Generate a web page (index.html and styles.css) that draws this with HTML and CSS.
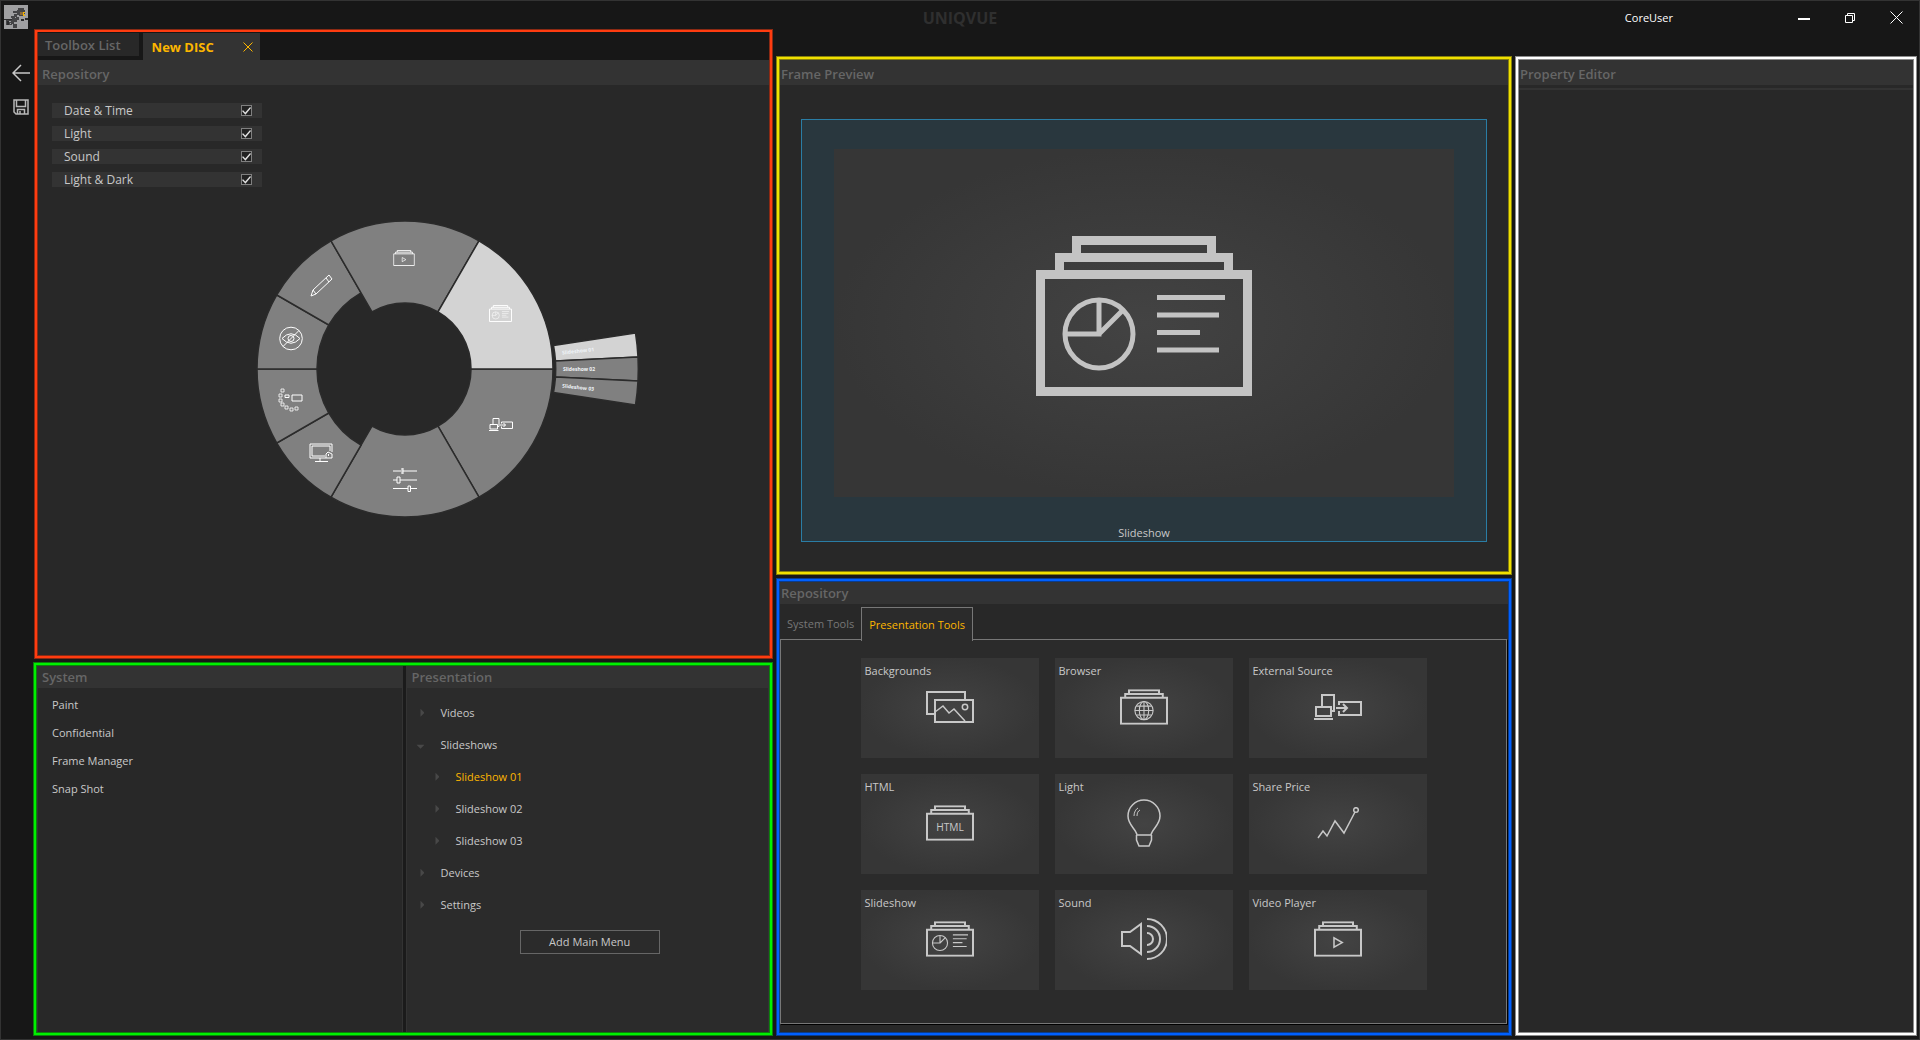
FILE: index.html
```html
<!DOCTYPE html>
<html lang="en">
<head>
<meta charset="utf-8">
<meta name="viewport" content="width=device-width, initial-scale=1">
<title>UNIQVUE</title>
<link rel="stylesheet" href="styles.css">
</head>
<body>
<svg class="defs" aria-hidden="true">
  <symbol id="stack" viewBox="0 0 216 160">
    <g fill="none" stroke="currentColor" stroke-width="9">
      <path d="M4.500 38.500H211.500V155.500H4.500Z"/>
      <path d="M23.500 38V21.500H192.500V38"/>
      <path d="M40.500 21V4.500H175.500V21"/>
    </g>
  </symbol>
  <symbol id="slides" viewBox="0 0 216 160">
    <use href="#stack" width="216" height="160"/>
    <g fill="none" stroke="currentColor" stroke-width="5">
      <circle cx="63" cy="98" r="34"/>
      <path d="M63 64V98H29M63 98L87 74"/>
      <path d="M121 61.500H189M121 79H183M121 96.500H164M121 114H183"/>
    </g>
  </symbol>
  <symbol id="video" viewBox="0 0 216 160">
    <use href="#stack" width="216" height="160"/>
    <path d="M90 75V117L127 96Z" fill="none" stroke="currentColor" stroke-width="7"/>
  </symbol>
  <symbol id="external" viewBox="0 0 48 26">
    <g fill="none" stroke="currentColor" stroke-width="2">
      <path d="M8 12V1H20V17H18M2 13H17V22H2ZM0 25H19"/>
      <path d="M25 11V8H47V21H25V17"/>
      <path d="M22 14H33M29 10L33 14L29 18"/>
    </g>
  </symbol>
</svg>

<header class="titlebar">
  <svg class="app-logo" viewBox="0 0 24 24" shape-rendering="crispEdges" aria-label="UNIQVUE">
    <path fill="#a0a0a2" d="M0 0h24v24H0z"/>
    <path fill="#454547" d="M14 3h6v2h1v4h-2v2h-4v-1h-2V8H9V6h4V5h1zM10 9h3v3h2v3h-2v2h-3v2h3v4H9v-4H8v1H2v-5h6v-2H7v-2h3z"/>
    <path fill="#2b2b2d" d="M0 14h8v1H0zM3 16h2v4H3zM17 14h3v2h-3zM21 13h3v2h-3z"/>
    <path fill="#a0a0a2" d="M5 16h2v1H5zM11 12h1v1h-1zM6 18h1v1H6z"/>
    <path fill="#8a6a3c" d="M16 7h3v3h-3z"/><path fill="#f5b400" d="M19 7h2v1h-1v2h1v1h-2z"/>
  </svg>
  <h1 class="app-title">UNIQVUE</h1>
  <div class="session">
    <span class="user">CoreUser</span>
    <div class="window-buttons">
      <button type="button" aria-label="Minimize"><svg width="12" height="14"><path d="M0 8H12" stroke="#fff" stroke-width="2"/></svg></button>
      <button type="button" aria-label="Restore"><svg width="12" height="12" fill="none" stroke="#fff"><path d="M1.500 3.500H8.500V10.500H1.500ZM3.500 3V1.500H10.500V8.500H9"/></svg></button>
      <button type="button" aria-label="Close"><svg width="13" height="13" stroke="#fff"><path d="M.5 .5L12.500 12.500M12.500 .5L.5 12.500"/></svg></button>
    </div>
  </div>
</header>

<div class="workspace">
  <nav class="rail" aria-label="File">
    <button type="button" aria-label="Back"><svg width="18" height="18" fill="none" stroke="#c8c8c8" stroke-width="1.500"><path d="M18 9H1M9 1L1 9L9 17"/></svg></button>
    <button type="button" aria-label="Save"><svg width="16" height="16" fill="none" stroke="#b8b8b8" stroke-width="1.500"><path d="M1 1H15V15H3L1 13ZM3.500 1V7.500H12.500V1M4.500 15V10.500H11.500V15M7 12V15"/></svg></button>
  </nav>

  <div class="column">
    <section class="panel panel-disc">
      <div class="doc-tabs" role="tablist">
        <button type="button" role="tab" class="doc-tab">Toolbox List</button>
        <button type="button" role="tab" class="doc-tab is-active" aria-selected="true">New DISC
          <svg width="10" height="10" stroke="#fdb600"><path d="M.5 .5L9.500 9.500M9.500 .5L.5 9.500"/></svg></button>
      </div>
      <h2 class="panel-head tall inset">Repository</h2>
      <div class="disc-body">
        <div class="options">
          <label class="option">Date &amp; Time<input type="checkbox" checked></label>
          <label class="option">Light<input type="checkbox" checked></label>
          <label class="option">Sound<input type="checkbox" checked></label>
          <label class="option">Light &amp; Dark<input type="checkbox" checked></label>
        </div>
        <svg class="disc" viewBox="-241 -150 480 300" role="img" aria-label="Disc menu">
          <g fill="#808080" stroke="#2b2b2b" stroke-width="1.500">
            <path d="M66 0A66 66 0 0 1 33 57.200L74 128.200A148 148 0 0 0 148 0Z"/>
            <path d="M33 57.200A66 66 0 0 1 -33 57.200L-74 128.200A148 148 0 0 0 74 128.200Z"/>
            <path d="M-44 76.200A88 88 0 0 1 -76.200 44L-128.200 74A148 148 0 0 0 -74 128.200Z"/>
            <path d="M-76.200 44A88 88 0 0 1 -88 0H-148A148 148 0 0 0 -128.200 74Z"/>
            <path d="M-88 0A88 88 0 0 1 -76.200 -44L-128.200 -74A148 148 0 0 0 -148 0Z"/>
            <path d="M-76.200 -44A88 88 0 0 1 -44 -76.200L-74 -128.200A148 148 0 0 0 -128.200 -74Z"/>
            <path d="M-33 -57.200A66 66 0 0 1 33 -57.200L74 -128.200A148 148 0 0 0 -74 -128.200Z"/>
            <path fill="#d3d3d3" d="M33 -57.200A66 66 0 0 1 66 0H148A148 148 0 0 0 74 -128.200Z"/>
            <path fill="#d3d3d3" d="M148.500 -23.500L230.500 -36A233 233 0 0 1 233 -12L150.500 -8A152 152 0 0 0 148.500 -23.500Z"/>
            <path d="M150.500 -8L233 -12A233 233 0 0 1 233 12L150.500 8A152 152 0 0 0 150.500 -8Z"/>
            <path d="M150.500 8L233 12A233 233 0 0 1 230.500 36L148.500 23.500A152 152 0 0 0 150.500 8Z"/>
          </g>
          <g class="disc-label">
            <text x="158" y="2" transform="rotate(-6)">Slideshow 01</text>
            <text x="158" y="2">Slideshow 02</text>
            <text x="158" y="2" transform="rotate(6)">Slideshow 03</text>
          </g>
          <g color="#fff" fill="none" stroke="#fff">
            <use href="#video" x="-12" y="-119" width="22" height="16" stroke="none"/>
            <use href="#slides" x="84" y="-64" width="23" height="17" stroke="none"/>
            <use href="#external" x="84" y="49" width="24" height="13" stroke="none"/>
            <path d="M-12 102H-4M-2 102H12M-3 99V105M-2 99V105M-12 111H-8M-5 111H12M-8 108H-5V114H-8ZM-12 119.500H3M6 119.500H12M3 117H5.500V122.500H3Z"/>
            <path d="M-79 89H-95V75H-73V83M-93 87V77H-75V82M-80 87H-93M-85 89V92M-90 92.500H-77M-79 89V85L-77 83L-73 85V89ZM-76.500 87V85"/>
            <path d="M-113 26H-103V32H-113ZM-120 26H-116V28.500H-120Z"/>
            <path d="M-124 20h3v3h-3zM-126 25h3v3h-3zM-126 30h3v3h-3zM-124 34h3v3h-3zM-120 37h3v3h-3zM-115 39h3v3h-3zM-110 38h3v3h-3z" stroke-width=".8"/>
            <circle cx="-114" cy="-30.500" r="11.300"/>
            <path d="M-123 -30.500Q-114 -40 -105 -30.500Q-114 -21 -123 -30.500ZM-122 -22.500L-106 -38.500"/>
            <circle cx="-114" cy="-30.500" r="3"/>
            <path d="M-94 -73L-92 -79L-76 -94L-73 -90L-89 -75ZM-92 -79L-89 -75M-79 -91L-76 -87"/>
          </g>
        </svg>
      </div>
    </section>

    <section class="panel panel-menus">
      <div class="subpanel system">
        <h2 class="panel-head inset">System</h2>
        <ul class="system-list">
          <li>Paint</li><li>Confidential</li><li>Frame Manager</li><li>Snap Shot</li>
        </ul>
      </div>
      <div class="subpanel presentation">
        <h2 class="panel-head inset">Presentation</h2>
        <ul class="tree">
          <li><span class="node">Videos</span></li>
          <li><span class="node open">Slideshows</span>
            <ul>
              <li><span class="node selected">Slideshow 01</span></li>
              <li><span class="node">Slideshow 02</span></li>
              <li><span class="node">Slideshow 03</span></li>
            </ul>
          </li>
          <li><span class="node">Devices</span></li>
          <li><span class="node">Settings</span></li>
        </ul>
        <button type="button" class="add-button">Add Main Menu</button>
      </div>
    </section>
  </div>

  <div class="column lowered">
    <section class="panel panel-preview">
      <h2 class="panel-head tall">Frame Preview</h2>
      <figure class="frame">
        <div class="frame-tile"><svg width="216" height="160" color="#c3c3c3"><use href="#slides" width="216" height="160"/></svg></div>
        <figcaption>Slideshow</figcaption>
      </figure>
    </section>

    <section class="panel panel-tools">
      <h2 class="panel-head">Repository</h2>
      <div class="tool-tabs" role="tablist">
        <button type="button" role="tab" class="tool-tab">System Tools</button>
        <button type="button" role="tab" class="tool-tab is-active" aria-selected="true">Presentation Tools</button>
      </div>
      <div class="tool-sheet">
        <div class="tools">
          <button type="button" class="tool"><span>Backgrounds</span>
            <svg width="48" height="32" fill="none" stroke="currentColor" stroke-width="2"><path d="M8 23H1V1H39V8M9 9H47V31H9Z"/><path d="M9 21L17 15L23 22L28 18L39 30" stroke-width="1.500"/><circle cx="39" cy="16" r="2.700" stroke-width="1.500"/></svg></button>
          <button type="button" class="tool"><span>Browser</span>
            <svg width="48" height="36" viewBox="0 0 216 160"><use href="#stack" width="216" height="160"/><g fill="none" stroke="currentColor" stroke-width="5"><circle cx="108" cy="96" r="41"/><ellipse cx="108" cy="96" rx="21" ry="41"/><path d="M108 55V137M67 96H149M73 76H143M73 116H143"/></g></svg></button>
          <button type="button" class="tool"><span>External Source</span>
            <svg width="48" height="26"><use href="#external" width="48" height="26"/></svg></button>
          <button type="button" class="tool"><span>HTML</span>
            <svg width="48" height="36" viewBox="0 0 216 160"><use href="#stack" width="216" height="160"/><text class="icon-text" x="108" y="114">HTML</text></svg></button>
          <button type="button" class="tool"><span>Light</span>
            <svg width="34" height="48" fill="none" stroke="currentColor" stroke-width="1.500"><path d="M10 36C9 30 1 26 1 17A16 16 0 0 1 33 17C33 26 25 30 24 36ZM9.500 36V41L12 47H22L24.500 41V36"/><path d="M7 17C7 13 9 10 11 9M10 17C10 14 11 12 13 11" stroke-width="1"/></svg></button>
          <button type="button" class="tool"><span>Share Price</span>
            <svg width="42" height="32" fill="none" stroke="currentColor" stroke-width="1.500"><path d="M1 31L6 24L10 29L18 14L27 26L38 5"/><circle cx="39" cy="3" r="2.300"/></svg></button>
          <button type="button" class="tool"><span>Slideshow</span>
            <svg width="48" height="36"><use href="#slides" width="48" height="36"/></svg></button>
          <button type="button" class="tool"><span>Sound</span>
            <svg width="46" height="42" fill="none" stroke="currentColor" stroke-width="2"><path d="M1 14H9L20 6V36L9 28H1Z"/><path d="M26 15A6 6 0 0 1 26 27M26 8A13 13 0 0 1 26 34M26 1A20 20 0 0 1 26 41"/></svg></button>
          <button type="button" class="tool"><span>Video Player</span>
            <svg width="48" height="36"><use href="#video" width="48" height="36"/></svg></button>
        </div>
      </div>
    </section>
  </div>

  <div class="column lowered">
    <section class="panel panel-props">
      <h2 class="panel-head tall">Property Editor</h2>
      <hr>
    </section>
  </div>
</div>
</body>
</html>
```

FILE: styles.css
```css
* { box-sizing: border-box; }

body {
  margin: 0;
  min-height: 100vh;
  display: flex;
  flex-direction: column;
  border: 1px solid #333;
  background: #171717;
  color: #c8c8c8;
  font: 11px/16px "Open Sans", "Noto Sans", sans-serif;
}

h1, h2, ul, figure { margin: 0; padding: 0; }
ul { list-style: none; }
button { margin: 0; padding: 0; border: 0; background: none; color: inherit; font: inherit; }
svg { display: block; }
.defs { display: none; }

/* Title bar */
.titlebar {
  height: 28px;
  display: grid;
  grid-template-columns: 1fr auto 1fr;
  align-items: center;
}
.app-logo { width: 24px; height: 24px; margin-left: 3px; align-self: end; }
.app-title { color: #2f2f2f; font-size: 16px; line-height: 20px; padding-top: 6px; }
.session { display: flex; justify-content: flex-end; align-items: center; gap: 125px; padding: 5px 16px 0 0; color: #fff; }
.window-buttons { display: flex; align-items: center; gap: 34px; }

/* Workspace */
.workspace {
  flex: 1;
  display: grid;
  grid-template-columns: 30px minmax(0, 739fr) minmax(0, 736fr) minmax(0, 402fr);
  gap: 3px;
  padding: 0 2px 3px 0;
}
.rail { display: flex; flex-direction: column; align-items: center; gap: 17px; padding: 35px 0 0 10px; }
.column { display: flex; flex-direction: column; gap: 3px; }
.lowered { padding-top: 27px; }

.panel {
  display: flex;
  flex-direction: column;
  margin: 1px;
  border: 2px solid var(--frame);
  box-shadow: 0 0 0 1px var(--edge), inset 0 0 0 1px var(--edge);
  background: #282828;
}
.panel-disc { --frame: #ff3c10; --edge: #8a2a14; flex: 630 1 0; padding: 0 1px; }
.panel-menus { --frame: #00f000; --edge: #0c800c; flex: 370 1 0; flex-direction: row; gap: 3px; padding: 1px; margin-left: 0; background: #1b1b1b; }
.panel-preview { --frame: #f0e000; --edge: #87800c; flex: 0 1 auto; padding: 1px 1px 30px; }
.panel-tools { --frame: #0060ff; --edge: #0c3c8a; flex: 1 1 auto; padding: 1px 1px 9px; }
.panel-props { --frame: #fff; --edge: #8c8c8c; flex: 1; padding: 1px; }

.panel-head {
  flex: none;
  height: 22px;
  padding: 0 1px;
  background: #333;
  color: #666;
  font-size: 13px;
  font-weight: 600;
  line-height: 22px;
}
.panel-head.tall { height: 25px; line-height: 28px; }
.panel-head.inset { padding-left: 4px; }

/* Disc designer */
.doc-tabs { display: flex; align-items: flex-start; gap: 4px; height: 28px; padding-top: 1px; background: #171717; }
.doc-tab { height: 23px; padding: 0 18px 0 7px; background: #282828; color: #666; font-size: 13px; font-weight: 600; line-height: 24px; }
.doc-tab.is-active { display: flex; align-items: center; gap: 29px; height: 27px; padding: 0 7px 0 9px; background: #333; color: #fdb600; font-weight: 700; }
.disc-body { flex: 1; display: flex; flex-direction: column; align-items: center; gap: 32px; padding: 18px 0 24px; }
.options { align-self: flex-start; width: 210px; margin-left: 14px; display: grid; gap: 8px; }
.option { display: flex; align-items: center; justify-content: space-between; height: 15px; padding: 0 10px 0 12px; background: #333; font-size: 12px; }
.option input { appearance: none; width: 11px; height: 11px; margin: 0; border: 1px solid #808080; background: #222; }
.option input:checked::before {
  content: "";
  display: block;
  height: 9px;
  background: #e0e0e0;
  clip-path: polygon(0 55%, 12% 47%, 36% 72%, 90% 12%, 100% 22%, 38% 96%);
}
.disc { width: 480px; max-width: 100%; }
.disc-label { fill: #f0f4f8; font-size: 5px; font-weight: 700; }

/* System and presentation menus */
.subpanel { display: flex; flex-direction: column; border: 1px solid #333; border-width: 0 1px; background: #282828; }
.system { flex: 367 1 0; }
.presentation { flex: 363 1 0; background: #2b2b2b; }
.system-list { padding: 3px 14px; line-height: 28px; }
.tree { padding: 9px 0 9px 9px; line-height: 32px; }
.tree ul { padding-left: 15px; }
.node { display: flex; align-items: center; gap: 16px; }
.node::before { content: ""; width: 8px; height: 8px; background: #484848; clip-path: polygon(50% 0, 100% 50%, 50% 100%); }
.node.open::before { clip-path: polygon(0 50%, 100% 50%, 50% 100%); }
.node.selected { color: #fdb600; }
.add-button { align-self: center; width: 140px; height: 24px; margin-left: 4px; border: 1px solid #666; }

/* Frame preview */
.frame { margin: 34px 21px 0; padding: 29px 32px 0; border: 1px solid #2a7da5; background: #29373e; text-align: center; }
.frame-tile {
  min-height: 348px;
  display: grid;
  place-items: center;
  padding-bottom: 14px;
  background: radial-gradient(closest-side, #434343, #363636);
}
.frame figcaption { padding-top: 27px; line-height: 17px; }

/* Tools */
.tool-tabs { display: flex; align-items: flex-end; height: 37px; margin-bottom: -2px; }
.tool-tab { height: 34px; padding: 0 7px; color: #777; }
.tool-tab.is-active { position: relative; border: 1px solid #777; border-bottom: 0; background: #2b2b2b; color: #fdb600; }
.tool-sheet { flex: 1; margin-right: 1px; padding: 18px; border: 1px solid #777; box-shadow: 1px 1px 0 #000; background: #2b2b2b; }
.tools { display: grid; grid-template-columns: repeat(3, 178px); gap: 16px; justify-content: center; }
.tool {
  height: 100px;
  display: grid;
  background: radial-gradient(closest-side, #434343, #363636);
}
.tool > * { grid-area: 1 / 1; }
.tool span { place-self: start; padding: 5px 4px; }
.tool svg { place-self: center; margin-bottom: 2px; }
.icon-text { fill: currentColor; font-size: 46px; text-anchor: middle; }

/* Properties */
.panel-props hr { width: 100%; height: 2px; margin: 3px 0 0; border: 0; background: #333; }
```
